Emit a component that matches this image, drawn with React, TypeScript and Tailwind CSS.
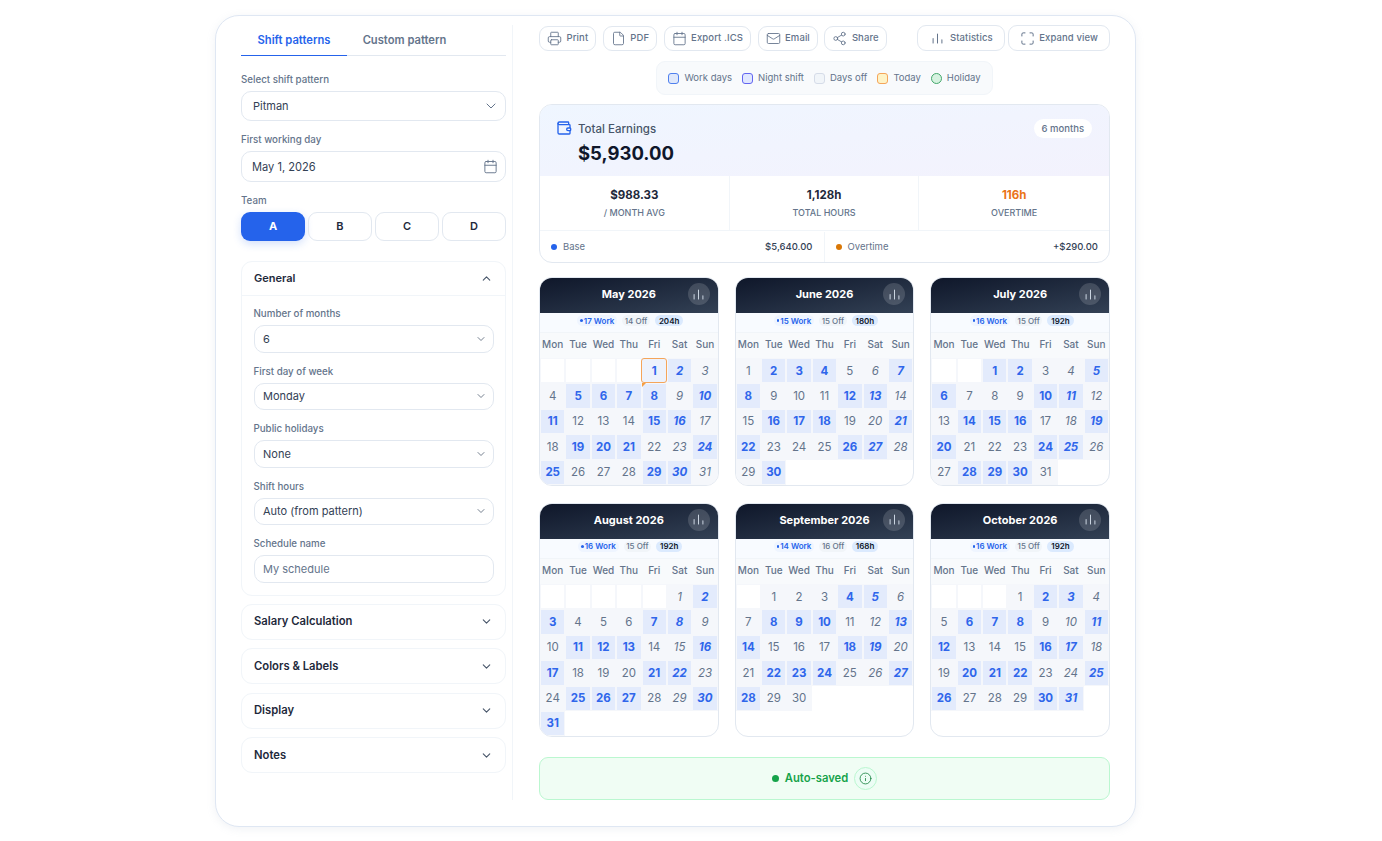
import {
  Calendar,
  ChevronDown,
  ChevronUp,
  File,
  Info,
  Mail,
  Maximize,
  Printer,
  Share2,
  Wallet,
} from "lucide-react";
import * as React from "react";

const months = [
  { name: "May 2026", offset: 4, days: 31, work: [1, 2, 5, 6, 7, 8, 10, 11, 15, 16, 19, 20, 21, 24, 25, 29, 30], off: 14, hours: 204 },
  { name: "June 2026", offset: 0, days: 30, work: [2, 3, 4, 7, 8, 12, 13, 16, 17, 18, 21, 22, 26, 27, 30], off: 15, hours: 180 },
  { name: "July 2026", offset: 2, days: 31, work: [1, 2, 5, 6, 10, 11, 14, 15, 16, 19, 20, 24, 25, 28, 29, 30], off: 15, hours: 192 },
  { name: "August 2026", offset: 5, days: 31, work: [2, 3, 7, 8, 11, 12, 13, 16, 17, 21, 22, 25, 26, 27, 30, 31], off: 15, hours: 192 },
  { name: "September 2026", offset: 1, days: 30, work: [4, 5, 8, 9, 10, 13, 14, 18, 19, 22, 23, 24, 27, 28], off: 16, hours: 168 },
  { name: "October 2026", offset: 3, days: 31, work: [2, 3, 6, 7, 8, 11, 12, 16, 17, 20, 21, 22, 25, 26, 30, 31], off: 15, hours: 192 },
];

const weekdays = ["Mon", "Tue", "Wed", "Thu", "Fri", "Sat", "Sun"];

function BarsIcon({ className }: { className?: string }) {
  return (
    <svg viewBox="0 0 12 12" fill="none" stroke="currentColor" strokeWidth="1.1" strokeLinecap="round" className={className}>
      <path d="M1.2 11V6M6 11V1.2M10.8 11V7.4" />
    </svg>
  );
}

function FieldLabel({ children }: { children: React.ReactNode }) {
  return <div className="text-[9.75px] leading-[12px] font-medium text-[#64748b]">{children}</div>;
}

function Field({ label, value, small }: { label: string; value: string; small?: boolean }) {
  return (
    <div>
      <FieldLabel>{label}</FieldLabel>
      <div
        className={`mt-[5px] flex items-center justify-between rounded-[10px] border border-[#e2e8f0] bg-white ${
          small ? "h-[27.5px] pl-[8.5px] pr-[6px]" : "h-[30px] pl-[11px] pr-[6px]"
        }`}
      >
        <span className="text-[11px] text-[#334155]">{value}</span>
        <ChevronDown className={small ? "h-[12px] w-[12px] text-[#475569]" : "h-[16px] w-[16px] text-[#64748b]"} strokeWidth={1.5} />
      </div>
    </div>
  );
}

function ToolButton({ icon, label, tall }: { icon: React.ReactNode; label: string; tall?: boolean }) {
  return (
    <div
      className={`flex items-center gap-[4.5px] rounded-[9px] border border-[#e2e8f0] bg-white text-[9.5px] font-medium tracking-[0.1px] text-[#64748b] ${
        tall ? "h-[26px] px-[11px]" : "h-[25px] px-[7px]"
      }`}
    >
      {icon}
      <span className="pt-[1px]">{label}</span>
    </div>
  );
}

function Collapsed({ title }: { title: string }) {
  return (
    <div className="flex h-[36px] items-center justify-between rounded-[11px] border border-[#f1f5f9] bg-white pl-[12px] pr-[12px]">
      <span className="pt-[0.5px] text-[11.25px] font-semibold text-[#1e293b]">{title}</span>
      <ChevronDown className="h-[13px] w-[13px] text-[#475569]" strokeWidth={2} />
    </div>
  );
}

function Legend({ swatch, label }: { swatch: string; label: string }) {
  return (
    <div className="flex items-center gap-[5px]">
      <span className={`h-[11px] w-[11px] border ${swatch}`} />
      <span className="text-[9.5px] text-[#64748b]">{label}</span>
    </div>
  );
}

function MonthCard({ month }: { month: (typeof months)[number] }) {
  const cells: (number | null)[] = [];
  for (let i = 0; i < month.offset; i++) cells.push(null);
  for (let d = 1; d <= month.days; d++) cells.push(d);

  return (
    <div className="overflow-hidden rounded-[13px] border border-[#e2e8f0] bg-white">
      <div className="relative flex h-[35px] items-center justify-center bg-gradient-to-br from-[#0f172a] to-[#334155] pb-[2px]">
        <span className="text-[11px] font-bold text-white">{month.name}</span>
        <div className="absolute right-[8px] top-[5px] flex h-[22px] w-[22px] items-center justify-center rounded-full bg-white/15">
          <BarsIcon className="h-[11px] w-[11px] text-[#cbd5e1]" />
        </div>
      </div>
      <div className="flex h-[19px] items-center justify-center gap-[5px] bg-[#f8fbff] pb-[4px] pl-[3px] text-[8px] font-semibold">
        <span className="flex h-[10.5px] items-center gap-[1px] rounded-full bg-[#eff5ff] px-[3px] text-[#2563eb]">
          <span className="h-[2.5px] w-[2.5px] rounded-full bg-[#2563eb]" />
          {month.work.length} Work
        </span>
        <span className="flex h-[10.5px] items-center rounded-full bg-[#f1f5f9] px-[2.5px] font-medium text-[#64748b]">{month.off} Off</span>
        <span className="flex h-[10.5px] items-center rounded-full bg-[#dbeafe] px-[4px] text-[#0f172a]">{month.hours}h</span>
      </div>
      <div className="grid h-[26px] grid-cols-7 items-center border-t border-[#f1f5f9] bg-[#f8fafc] pb-[2px] text-center text-[10px] font-medium text-[#64748b]">
        {weekdays.map((w) => (
          <span key={w}>{w}</span>
        ))}
      </div>
      <div className="grid grid-cols-7">
        {cells.map((d, i) => {
          const weekend = i % 7 >= 5;
          const isWork = d !== null && month.work.includes(d);
          const isToday = d === 1 && month.name === "May 2026";
          return (
            <div key={i} className={`relative aspect-square bg-[#f5f7fb] ${isToday ? "" : "p-px"}`}>
              <div
                className={`flex h-full items-center justify-center pt-[1px] text-[11.5px] ${
                  d === null ? "bg-white" : isWork ? "font-bold text-[#2f66eb]" : "text-[#64748b]"
                } ${isWork && !isToday ? "bg-[#e3ebfc]" : ""} ${weekend ? "italic" : ""} ${
                  isToday
                    ? "relative z-10 -mx-[0.5px] rounded-[3px] border border-[#f5a55a] bg-[#edf2fc]"
                    : ""
                }`}
              >
                {d}
              </div>
              {d === 8 && month.name === "May 2026" ? (
                <span className="absolute left-0 top-0 z-20 h-0 w-0 border-r-[4px] border-t-[4px] border-r-transparent border-t-[#f59e42]" />
              ) : null}
            </div>
          );
        })}
      </div>
    </div>
  );
}

export default function App() {
  return (
    <div className="min-h-[841px] bg-white pb-[14px] pl-[215px] pt-[15px] font-['Inter',sans-serif]">
      <div className="w-[921px] rounded-[24px] border border-[#dfe7f3] bg-white pb-[26px] pl-[25px] pr-[25px] pt-[9px] shadow-[0_2px_8px_rgba(148,163,184,0.14)]">
        <div className="flex">
          {/* left settings column */}
          <div className="w-[272px] shrink-0 border-r border-[#f1f5f9] pr-[6px]">
            <div className="flex h-[31px] border-b border-[#e2e8f0]">
              <div className="-mb-px flex h-[31px] w-[106px] items-center justify-center border-b border-[#2563eb] text-[11.2px] font-semibold text-[#2563eb]">
                Shift patterns
              </div>
              <div className="flex h-[30px] w-[115px] items-center justify-center text-[11.2px] font-semibold text-[#64748b]">
                Custom pattern
              </div>
            </div>
            <div className="mt-[18px]">
              <Field label="Select shift pattern" value="Pitman" />
            </div>
            <div className="mt-[13px]">
              <FieldLabel>First working day</FieldLabel>
              <div className="mt-[5px] flex h-[31px] items-center justify-between rounded-[10px] border border-[#e2e8f0] pl-[10px] pr-[7px]">
                <span className="pt-[1px] text-[11.1px] text-[#334155]">May 1, 2026</span>
                <Calendar className="h-[15px] w-[15px] text-[#64748b]" strokeWidth={1.5} />
              </div>
            </div>
            <div className="mt-[13px]">
              <FieldLabel>Team</FieldLabel>
            </div>
            <div className="mt-[5px] grid grid-cols-4 gap-[3px]">
              <div className="flex h-[29px] items-center justify-center rounded-[9px] bg-[#2563eb] text-[11px] font-bold text-white shadow-[0_3px_8px_rgba(37,99,235,0.2)]">
                A
              </div>
              {["B", "C", "D"].map((t) => (
                <div key={t} className="flex h-[29px] items-center justify-center rounded-[9px] border border-[#e2e8f0] text-[11px] font-semibold text-[#1e293b]">
                  {t}
                </div>
              ))}
            </div>

            <div className="mt-[20px] rounded-[11px] border border-[#f1f5f9] bg-white">
              <div className="flex h-[34px] items-center justify-between border-b border-[#f1f5f9] px-[12px]">
                <span className="text-[11px] font-semibold text-[#1e293b]">General</span>
                <ChevronUp className="h-[13px] w-[13px] text-[#475569]" strokeWidth={2} />
              </div>
              <div className="flex flex-col gap-[13px] px-[11.5px] pb-[12px] pt-[12px]">
                <Field small label="Number of months" value="6" />
                <Field small label="First day of week" value="Monday" />
                <Field small label="Public holidays" value="None" />
                <Field small label="Shift hours" value="Auto (from pattern)" />
                <div>
                  <FieldLabel>Schedule name</FieldLabel>
                  <div className="mt-[5px] flex h-[27.5px] items-center rounded-[10px] border border-[#e2e8f0] pl-[8.5px]">
                    <span className="text-[11px] text-[#64748b]">My schedule</span>
                  </div>
                </div>
              </div>
            </div>
            <div className="mt-[8px] flex flex-col gap-[8.5px]">
              <Collapsed title="Salary Calculation" />
              <Collapsed title="Colors & Labels" />
              <Collapsed title="Display" />
              <Collapsed title="Notes" />
            </div>
          </div>

          {/* right schedule column */}
          <div className="min-w-0 flex-1 pl-[26px]">
            <div className="flex items-center justify-between">
              <div className="flex items-center gap-[6.5px]">
                <ToolButton label="Print" icon={<Printer className="h-[15px] w-[15px]" strokeWidth={1.4} />} />
                <ToolButton label="PDF" icon={<File className="h-[15px] w-[15px]" strokeWidth={1.4} />} />
                <ToolButton label="Export .ICS" icon={<Calendar className="h-[15px] w-[15px]" strokeWidth={1.4} />} />
                <ToolButton label="Email" icon={<Mail className="h-[15px] w-[15px]" strokeWidth={1.4} />} />
                <ToolButton label="Share" icon={<Share2 className="h-[15px] w-[15px]" strokeWidth={1.4} />} />
              </div>
              <div className="flex items-center gap-[3px]">
                <ToolButton tall label="Statistics" icon={<BarsIcon className="mx-[2.5px] h-[11px] w-[11px]" />} />
                <ToolButton tall label="Expand view" icon={<Maximize className="h-[15px] w-[15px]" strokeWidth={1.6} />} />
              </div>
            </div>

            <div className="mt-[10px] flex justify-center">
              <div className="flex h-[34px] items-center gap-[10px] rounded-[9px] border border-[#f1f5f9] bg-[#f8fafc] px-[11px]">
                <Legend swatch="rounded-[3px] border-[#4f80ee] bg-[#dfe8fb]" label="Work days" />
                <Legend swatch="rounded-[3px] border-[#6366f1] bg-[#e0e7ff]" label="Night shift" />
                <Legend swatch="rounded-[3px] border-[#d5dce8] bg-[#f1f5f9]" label="Days off" />
                <Legend swatch="rounded-[3px] border-[#f5a55a] bg-[#fef3c7]" label="Today" />
                <Legend swatch="rounded-full border-[#43a86b] bg-[#d6f2e0]" label="Holiday" />
              </div>
            </div>

            <div className="mt-[9px] overflow-hidden rounded-[13px] border border-[#e2e8f0]">
              <div className="flex h-[71px] justify-between bg-gradient-to-br from-[#eff6ff] to-[#f3f2fd] pl-[16px] pr-[17px] pt-[14px]">
                <div className="flex gap-[6px]">
                  <Wallet className="mt-[1px] h-[16px] w-[16px] text-[#2563eb]" strokeWidth={2} />
                  <div>
                    <div className="mt-[1.5px] text-[11.5px] leading-[16px] font-medium text-[#475569]">Total Earnings</div>
                    <div className="mt-[3.5px] text-[18.5px] leading-[26px] font-bold text-[#0f172a]">$5,930.00</div>
                  </div>
                </div>
                <div className="flex h-[19px] items-center rounded-full bg-white px-[8px] pt-[1px] text-[9.5px] font-medium text-[#64748b]">
                  6 months
                </div>
              </div>
              <div className="grid h-[55px] grid-cols-3 border-b border-[#f1f5f9]">
                <div className="flex flex-col items-center justify-center gap-[4px] border-r border-[#f1f5f9]">
                  <span className="text-[11.5px] leading-[16px] font-bold text-[#1e293b]">$988.33</span>
                  <span className="text-[9px] leading-[12px] font-medium text-[#64748b]">/ MONTH AVG</span>
                </div>
                <div className="flex flex-col items-center justify-center gap-[4px] border-r border-[#f1f5f9]">
                  <span className="text-[11.5px] leading-[16px] font-bold text-[#1e293b]">1,128h</span>
                  <span className="text-[9px] leading-[12px] font-medium text-[#64748b]">TOTAL HOURS</span>
                </div>
                <div className="flex flex-col items-center justify-center gap-[4px]">
                  <span className="text-[11.5px] leading-[16px] font-bold text-[#ea7317]">116h</span>
                  <span className="text-[9px] leading-[12px] font-medium text-[#64748b]">OVERTIME</span>
                </div>
              </div>
              <div className="grid h-[31px] grid-cols-2 pt-[1px]">
                <div className="flex items-center justify-between border-r border-[#f1f5f9] pl-[11px] pr-[11px]">
                  <div className="flex items-center gap-[6px]">
                    <span className="h-[6px] w-[6px] rounded-full bg-[#2563eb]" />
                    <span className="text-[9.5px] text-[#64748b]">Base</span>
                  </div>
                  <span className="text-[9.5px] font-medium text-[#334155]">$5,640.00</span>
                </div>
                <div className="flex items-center justify-between pl-[11px] pr-[11px]">
                  <div className="flex items-center gap-[6px]">
                    <span className="h-[6px] w-[6px] rounded-full bg-[#d97706]" />
                    <span className="text-[9.5px] text-[#64748b]">Overtime</span>
                  </div>
                  <span className="text-[9.5px] font-medium text-[#334155]">+$290.00</span>
                </div>
              </div>
            </div>

            <div className="mt-[14px] grid grid-cols-3 gap-x-[16px] gap-y-[17px]">
              {months.map((m) => (
                <MonthCard key={m.name} month={m} />
              ))}
            </div>

            <div className="mt-[20px] flex h-[43px] items-center justify-center gap-[6px] rounded-[9px] border border-[#bbf7d0] bg-[#f0fdf4]">
              <span className="h-[7px] w-[7px] rounded-full bg-[#16a34a]" />
              <span className="text-[11.25px] font-semibold text-[#16a34a]">Auto-saved</span>
              <div className="flex h-[23px] w-[23px] items-center justify-center rounded-full border border-[#bbf7d0] bg-[#ecfdf5]">
                <Info className="h-[13px] w-[13px] text-[#15803d]" strokeWidth={1.5} />
              </div>
            </div>
          </div>
        </div>
      </div>
    </div>
  );
}
